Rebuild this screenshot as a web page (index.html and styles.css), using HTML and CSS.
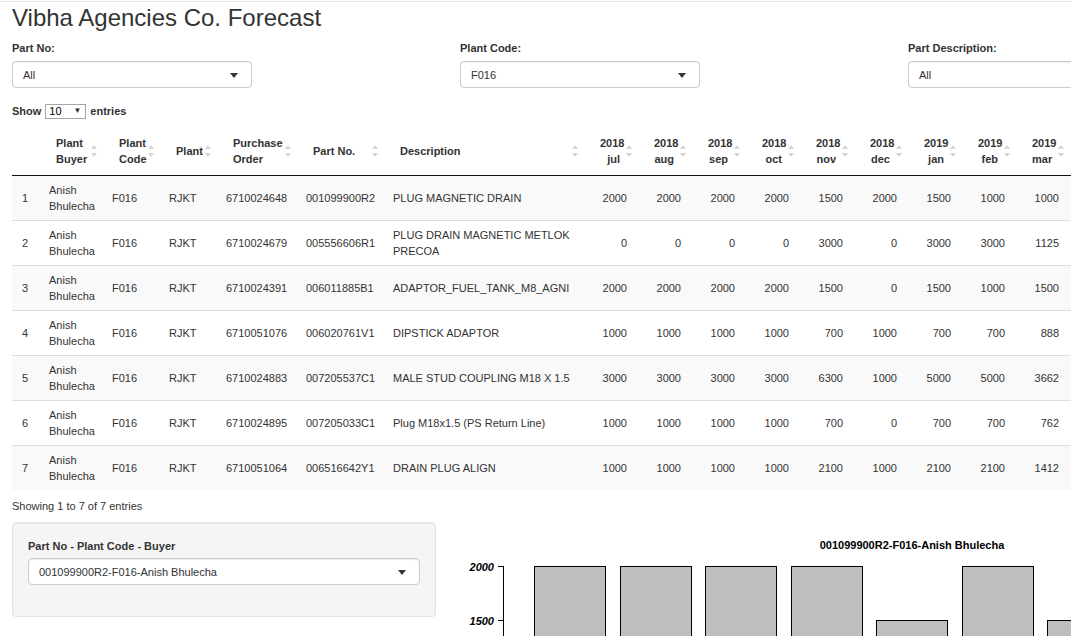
FILE: index.html
```html
<!DOCTYPE html>
<html>
<head>
<meta charset="utf-8">
<title>Vibha Agencies Co. Forecast</title>
<link rel="stylesheet" href="styles.css">
</head>
<body>
<div class="page">
  <h2 class="title">Vibha Agencies Co. Forecast</h2>

  <div class="filters">
    <div class="field">
      <label class="label">Part No:</label>
      <div class="select"><span>All</span><span class="caret"></span></div>
    </div>
    <div class="field">
      <label class="label">Plant Code:</label>
      <div class="select"><span>F016</span><span class="caret"></span></div>
    </div>
    <div class="field">
      <label class="label">Part Description:</label>
      <div class="select"><span>All</span><span class="caret"></span></div>
    </div>
  </div>

  <div class="length">Show <span class="mini-select"><span>10</span><span class="mini-caret">▼</span></span> entries</div>

  <table class="grid">
    <colgroup>
      <col class="c-idx"><col class="c-buyer"><col class="c-code"><col class="c-plant"><col class="c-po"><col class="c-part"><col class="c-desc">
      <col class="c-num"><col class="c-num"><col class="c-num"><col class="c-num"><col class="c-num"><col class="c-num"><col class="c-num"><col class="c-num"><col class="c-num"><col class="c-num">
    </colgroup>
    <thead>
      <tr>
        <th></th>
        <th class="sorting">Plant<br>Buyer</th>
        <th class="sorting">Plant<br>Code</th>
        <th class="sorting">Plant</th>
        <th class="sorting">Purchase<br>Order</th>
        <th class="sorting">Part No.</th>
        <th class="sorting">Description</th>
        <th class="sorting num">2018<br>jul</th>
        <th class="sorting num">2018<br>aug</th>
        <th class="sorting num">2018<br>sep</th>
        <th class="sorting num">2018<br>oct</th>
        <th class="sorting num">2018<br>nov</th>
        <th class="sorting num">2018<br>dec</th>
        <th class="sorting num">2019<br>jan</th>
        <th class="sorting num">2019<br>feb</th>
        <th class="sorting num">2019<br>mar</th>
        <th class="sorting num">2019<br>apr</th>
      </tr>
    </thead>
    <tbody>
      <tr>
        <td>1</td><td>Anish Bhulecha</td><td>F016</td><td>RJKT</td><td>6710024648</td><td>001099900R2</td><td class="desc">PLUG MAGNETIC DRAIN</td>
        <td class="num">2000</td><td class="num">2000</td><td class="num">2000</td><td class="num">2000</td><td class="num">1500</td><td class="num">2000</td><td class="num">1500</td><td class="num">1000</td><td class="num">1000</td><td class="num">1000</td>
      </tr>
      <tr>
        <td>2</td><td>Anish Bhulecha</td><td>F016</td><td>RJKT</td><td>6710024679</td><td>005556606R1</td><td class="desc">PLUG DRAIN MAGNETIC METLOK PRECOA</td>
        <td class="num">0</td><td class="num">0</td><td class="num">0</td><td class="num">0</td><td class="num">3000</td><td class="num">0</td><td class="num">3000</td><td class="num">3000</td><td class="num">1125</td><td class="num">1125</td>
      </tr>
      <tr>
        <td>3</td><td>Anish Bhulecha</td><td>F016</td><td>RJKT</td><td>6710024391</td><td>006011885B1</td><td class="desc">ADAPTOR_FUEL_TANK_M8_AGNI</td>
        <td class="num">2000</td><td class="num">2000</td><td class="num">2000</td><td class="num">2000</td><td class="num">1500</td><td class="num">0</td><td class="num">1500</td><td class="num">1000</td><td class="num">1500</td><td class="num">1500</td>
      </tr>
      <tr>
        <td>4</td><td>Anish Bhulecha</td><td>F016</td><td>RJKT</td><td>6710051076</td><td>006020761V1</td><td class="desc">DIPSTICK ADAPTOR</td>
        <td class="num">1000</td><td class="num">1000</td><td class="num">1000</td><td class="num">1000</td><td class="num">700</td><td class="num">1000</td><td class="num">700</td><td class="num">700</td><td class="num">888</td><td class="num">888</td>
      </tr>
      <tr>
        <td>5</td><td>Anish Bhulecha</td><td>F016</td><td>RJKT</td><td>6710024883</td><td>007205537C1</td><td class="desc">MALE STUD COUPLING M18 X 1.5</td>
        <td class="num">3000</td><td class="num">3000</td><td class="num">3000</td><td class="num">3000</td><td class="num">6300</td><td class="num">1000</td><td class="num">5000</td><td class="num">5000</td><td class="num">3662</td><td class="num">3662</td>
      </tr>
      <tr>
        <td>6</td><td>Anish Bhulecha</td><td>F016</td><td>RJKT</td><td>6710024895</td><td>007205033C1</td><td class="desc">Plug M18x1.5 (PS Return Line)</td>
        <td class="num">1000</td><td class="num">1000</td><td class="num">1000</td><td class="num">1000</td><td class="num">700</td><td class="num">0</td><td class="num">700</td><td class="num">700</td><td class="num">762</td><td class="num">762</td>
      </tr>
      <tr>
        <td>7</td><td>Anish Bhulecha</td><td>F016</td><td>RJKT</td><td>6710051064</td><td>006516642Y1</td><td class="desc">DRAIN PLUG ALIGN</td>
        <td class="num">1000</td><td class="num">1000</td><td class="num">1000</td><td class="num">1000</td><td class="num">2100</td><td class="num">1000</td><td class="num">2100</td><td class="num">2100</td><td class="num">1412</td><td class="num">1412</td>
      </tr>
    </tbody>
  </table>

  <div class="info">Showing 1 to 7 of 7 entries</div>

  <div class="bottom">
    <div class="well">
      <label class="label">Part No - Plant Code - Buyer</label>
      <div class="select"><span>001099900R2-F016-Anish Bhulecha</span><span class="caret"></span></div>
    </div>
    <div class="chart">
      <svg width="611" height="330" viewBox="0 0 611 330">
        <text class="chart-title" x="452" y="27" text-anchor="middle">001099900R2-F016-Anish Bhulecha</text>
        <g class="axis">
          <line x1="43.5" y1="44" x2="43.5" y2="260"/>
          <line x1="38" y1="44.5" x2="43.5" y2="44.5"/>
          <line x1="38" y1="98.5" x2="43.5" y2="98.5"/>
          <line x1="38" y1="152.5" x2="43.5" y2="152.5"/>
          <line x1="38" y1="206.5" x2="43.5" y2="206.5"/>
          <line x1="38" y1="260" x2="43.5" y2="260"/>
        </g>
        <g class="ticks">
          <text x="34" y="48.5" text-anchor="end">2000</text>
          <text x="34" y="102.5" text-anchor="end">1500</text>
          <text x="34" y="156.5" text-anchor="end">1000</text>
          <text x="34" y="210.5" text-anchor="end">500</text>
          <text x="34" y="264" text-anchor="end">0</text>
        </g>
        <g class="bars">
          <rect x="74.5" y="44.5" width="71" height="216"/>
          <rect x="160.5" y="44.5" width="71" height="216"/>
          <rect x="245.5" y="44.5" width="71" height="216"/>
          <rect x="331.5" y="44.5" width="71" height="216"/>
          <rect x="416.5" y="98.5" width="71" height="162"/>
          <rect x="502.5" y="44.5" width="71" height="216"/>
          <rect x="587.5" y="98.5" width="71" height="162"/>
        </g>
        <g class="xlabels">
          <text x="110" y="279" text-anchor="middle">2018 jul</text>
          <text x="196" y="279" text-anchor="middle">2018 aug</text>
          <text x="281" y="279" text-anchor="middle">2018 sep</text>
          <text x="367" y="279" text-anchor="middle">2018 oct</text>
          <text x="452" y="279" text-anchor="middle">2018 nov</text>
          <text x="538" y="279" text-anchor="middle">2018 dec</text>
        </g>
      </svg>
    </div>
  </div>
</div>
</body>
</html>
```
FILE: styles.css
```css
html, body {
  margin: 0;
  padding: 0;
  overflow: hidden;
  background: #fff;
}

body {
  font-family: "Liberation Sans", Arial, Helvetica, sans-serif;
  font-size: 11px;
  color: #333;
}

.page {
  margin-top: 1px;
  border-top: 1px solid #e3e3e3;
  padding: 0 12px;
  width: 1400px;
}

.title {
  margin: 3px 0 0;
  font-size: 24px;
  line-height: 26px;
  font-weight: normal;
  color: #333;
}

.filters {
  display: grid;
  grid-template-columns: 448px 448px 448px;
  margin-top: 10px;
}

.label {
  display: block;
  font-weight: bold;
  font-size: 11px;
  line-height: 15px;
  margin-bottom: 5px;
}

.select {
  box-sizing: border-box;
  width: 240px;
  height: 27px;
  border: 1px solid #ccc;
  border-radius: 4px;
  box-shadow: inset 0 1px 1px rgba(0, 0, 0, 0.075);
  background: #fff;
  display: flex;
  align-items: center;
  justify-content: space-between;
  padding: 0 13px 0 10px;
  font-size: 11px;
}

.caret {
  width: 0;
  height: 0;
  border-left: 4.5px solid transparent;
  border-right: 4.5px solid transparent;
  border-top: 5px solid #333;
  margin-top: 1px;
}

.length {
  margin-top: 15px;
  line-height: 16px;
  font-size: 11px;
  font-weight: bold;
  display: flex;
  align-items: center;
  gap: 4px;
}

.mini-select {
  box-sizing: border-box;
  width: 41px;
  height: 15px;
  border: 1px solid #a6a6a6;
  display: inline-flex;
  align-items: center;
  justify-content: space-between;
  padding: 0 4px 0 3px;
  font-weight: normal;
  color: #000;
  background: #fff;
}

.mini-caret {
  font-size: 8px;
  color: #333;
}

.grid {
  margin-top: 10px;
  border-collapse: collapse;
  table-layout: fixed;
  width: 1111px;
  font-size: 11px;
  line-height: 16px;
}

.c-idx { width: 27px; }
.c-buyer { width: 63px; }
.c-code { width: 57px; }
.c-plant { width: 57px; }
.c-po { width: 80px; }
.c-part { width: 87px; }
.c-desc { width: 200px; }
.c-num { width: 54px; }

.grid th {
  position: relative;
  padding: 6px 17px 8px;
  text-align: left;
  font-weight: bold;
  vertical-align: middle;
  border-bottom: 1px solid #111;
}

.grid th.num {
  text-align: right;
}

.grid th.sorting::before,
.grid th.sorting::after {
  content: "";
  position: absolute;
  right: 5px;
  top: 50%;
  width: 0;
  height: 0;
  border-left: 3.5px solid transparent;
  border-right: 3.5px solid transparent;
}

.grid th.sorting::before {
  margin-top: -7px;
  border-bottom: 4px solid #d6d6d6;
}

.grid th.sorting::after {
  margin-top: 1px;
  border-top: 4px solid #d6d6d6;
}

.grid td {
  height: 44px;
  box-sizing: border-box;
  padding: 6px 10px;
  vertical-align: middle;
  border-top: 1px solid #ddd;
  text-align: left;
}

.grid tbody tr:first-child td {
  border-top: none;
}

.grid tbody tr:nth-child(odd) td {
  background: #f9f9f9;
}

.grid td.desc {
  padding-right: 8px;
}

.grid td.num {
  text-align: right;
}

.info {
  margin-top: 9px;
  line-height: 15px;
  font-size: 11px;
}

.bottom {
  display: grid;
  grid-template-columns: 448px 611px;
  margin-top: 8px;
  align-items: start;
}

.well {
  box-sizing: border-box;
  width: 424px;
  min-height: 95px;
  background: #f5f5f5;
  border: 1px solid #e3e3e3;
  border-radius: 4px;
  padding: 16px 15px 31px;
  box-shadow: inset 0 1px 1px rgba(0, 0, 0, 0.05);
}

.well .label {
  margin-bottom: 4px;
}

.well .select {
  width: 100%;
}

.chart svg {
  display: block;
}

.chart-title {
  font-family: "Liberation Sans", Arial, sans-serif;
  font-weight: bold;
  font-size: 11px;
  fill: #000;
}

.axis line {
  stroke: #000;
  stroke-width: 1;
}

.ticks text {
  font-family: "Liberation Sans", Arial, sans-serif;
  font-weight: bold;
  font-style: italic;
  font-size: 11px;
  fill: #000;
}

.bars rect {
  fill: #bebebe;
  stroke: #000;
  stroke-width: 1;
}

.xlabels text {
  font-family: "Liberation Sans", Arial, sans-serif;
  font-size: 11px;
  fill: #000;
}
```
